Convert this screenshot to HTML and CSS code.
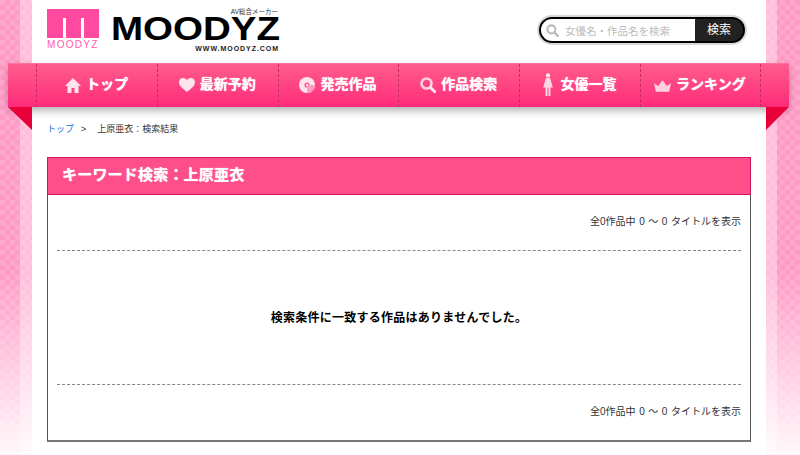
FILE: index.html
```html
<!DOCTYPE html>
<html lang="ja">
<head>
    <meta charset="UTF-8">
    <title>キーワード検索：上原亜衣</title>
    <link rel="stylesheet" href="styles.css">
</head>
<body>
<div class="page">
    <header class="head">
        <a class="logo">
            <span class="logo-mark">
                <span class="logo-box"><i></i><i></i></span>
                <span class="logo-small">MOODYZ</span>
            </span>
            <span class="logo-word">
                <span class="logo-sub">AV総合メーカー</span>
                <span class="logo-name">MOODYZ</span>
                <span class="logo-url">WWW.MOODYZ.COM</span>
            </span>
        </a>
        <form class="search">
            <div class="search-input">
                <svg class="search-icon" viewBox="0 0 14 14"><circle cx="5.8" cy="5.8" r="4.3" fill="none" stroke="#bbb" stroke-width="2.2"/><path d="M9 9l4 4" stroke="#bbb" stroke-width="2.6" stroke-linecap="round"/></svg>
                <span>女優名・作品名を検索</span>
            </div>
            <div class="search-btn">検索</div>
        </form>
    </header>

    <nav class="nav">
        <a class="nav-item">
            <svg class="ico" viewBox="0 0 16 16"><path d="M8 1L0 9h2.5v7h4v-5h3v5h4V9H16z" fill="#ffe3ee"/></svg><span>トップ</span>
        </a>
        <a class="nav-item">
            <svg class="ico" viewBox="0 0 16 16"><path d="M8 15C3 11 0 8.500 0 5.200 0 2.500 2 1 4.200 1 5.800 1 7.200 1.900 8 3.200 8.800 1.900 10.200 1 11.800 1 14 1 16 2.500 16 5.200 16 8.500 13 11 8 15z" fill="#ffe3ee"/></svg><span>最新予約</span>
        </a>
        <a class="nav-item">
            <svg class="ico" viewBox="0 0 16 16"><circle cx="8" cy="8" r="8" fill="#ffe3ee"/><circle cx="8" cy="8" r="2.600" fill="#ff4f8b"/><path d="M8 8l8 0a8 8 0 0 1-8 8z" fill="#ff9cc0"/><circle cx="8" cy="8" r="1.200" fill="#ffe3ee"/></svg><span>発売作品</span>
        </a>
        <a class="nav-item">
            <svg class="ico" viewBox="0 0 16 16"><circle cx="6.500" cy="6.500" r="5" fill="none" stroke="#ffd0e0" stroke-width="2.600"/><path d="M10.500 10.500l4.300 4.300" stroke="#ffe3ee" stroke-width="3" stroke-linecap="round"/></svg><span>作品検索</span>
        </a>
        <a class="nav-item">
            <svg class="ico ico-woman" viewBox="0 0 10 24"><circle cx="5" cy="2.500" r="2.300" fill="#ffe3ee"/><path d="M3 5.300h4l.9 2.200L10 15H7.600v9H5.500v-8.500h-1V24H2.400v-9H0l2.100-7.500z" fill="#ffd6e5"/></svg><span>女優一覧</span>
        </a>
        <a class="nav-item">
            <svg class="ico ico-crown" viewBox="0 0 18 12"><path d="M0 3l4.500 3L9 0l4.500 6L18 3l-2 9H2z" fill="#ffd0e0"/></svg><span>ランキング</span>
        </a>
        <span class="fold fold-left"></span>
        <span class="fold fold-right"></span>
    </nav>

    <div class="crumb"><a class="crumb-link">トップ</a><span class="crumb-sep">&gt;</span>上原亜衣：検索結果</div>

    <section class="panel">
        <h2 class="panel-title">キーワード検索：上原亜衣</h2>
        <div class="panel-body">
            <p class="count count-top">全0作品中 0 ～ 0 タイトルを表示</p>
            <p class="empty">検索条件に一致する作品はありませんでした。</p>
            <p class="count">全0作品中 0 ～ 0 タイトルを表示</p>
        </div>
    </section>
</div>
</body>
</html>
```

FILE: styles.css
```css
* {
    box-sizing: border-box;
}

html, body {
    height: 100%;
}

body {
    margin: 0;
    overflow: hidden;
    font-family: "Liberation Sans", "Noto Sans CJK JP", sans-serif;
    color: #333;
    background-color: #fff;
    background-image:
        linear-gradient(rgba(255, 255, 255, 0) 270px, #fff 470px),
        linear-gradient(90deg, rgba(255, 255, 255, 0) 20px, rgba(255, 255, 255, 0.35) 20px, rgba(255, 255, 255, 0.35) 777px, rgba(255, 255, 255, 0) 777px),
        repeating-conic-gradient(#ff9ac4 0 25%, #ffa8ce 0 50%);
    background-size: 100% 100%, 100% 100%, 10px 10px;
}

.page {
    width: 734px;
    height: 100%;
    margin-left: 32px;
    padding: 0 15px;
    background: #fff;
}

.head {
    display: flex;
    justify-content: space-between;
    height: 63px;
}

.logo {
    display: flex;
    gap: 13px;
    padding-top: 9px;
}

.logo-mark {
    display: flex;
    flex-direction: column;
    width: 52px;
}

.logo-box {
    display: flex;
    justify-content: center;
    align-items: flex-end;
    gap: 15px;
    height: 29px;
    background: #ff4aa0;
}

.logo-box i {
    width: 3px;
    height: 20px;
    background: #fff;
}

.logo-small {
    margin-top: 3px;
    font-size: 10px;
    line-height: 8px;
    letter-spacing: 1.3px;
    color: #ff5cab;
    white-space: nowrap;
}

.logo-word {
    position: relative;
    display: block;
    width: 167px;
}

.logo-sub {
    position: absolute;
    right: 1px;
    top: -2px;
    font-size: 6.500px;
    line-height: 9px;
    color: #333;
}

.logo-name {
    display: block;
    margin: 6px 0 0 -1px;
    font-weight: bold;
    font-size: 33.500px;
    line-height: 28px;
    color: #000;
    transform: scaleX(1.15);
    transform-origin: left;
}

.logo-url {
    display: block;
    margin-top: 2px;
    text-align: right;
    font-weight: bold;
    font-size: 7px;
    line-height: 8px;
    letter-spacing: 0.95px;
    color: #222;
}

.search {
    display: flex;
    width: 206px;
    height: 26px;
    margin: 17px 6px 0 0;
    border: 2px solid #000;
    border-radius: 13px;
    box-shadow: 0 0 0 2px #d8d8d8;
    overflow: hidden;
    background: #222;
}

.search-input {
    display: flex;
    align-items: center;
    gap: 6px;
    width: 154px;
    padding-left: 5px;
    background: #fff;
    font-size: 10.500px;
    color: #bbb;
    white-space: nowrap;
}

.search-icon {
    width: 13px;
    height: 13px;
}

.search-btn {
    flex: 1;
    text-align: center;
    font-size: 12px;
    line-height: 22px;
    color: #fff;
}

.nav {
    position: relative;
    display: flex;
    width: 781px;
    height: 44px;
    margin-left: -39px;
    padding-left: 28px;
    background: linear-gradient(#ff5c8d, #ff2b78);
    border-top: 1px solid #ff6f9a;
    box-shadow: 0 4px 8px -1px rgba(0, 0, 0, 0.35);
}

.nav-item {
    display: flex;
    flex: none;
    justify-content: center;
    align-items: center;
    gap: 5px;
    width: 120.800px;
    padding: 0 1px 5px 0;
    border-left: 1px dashed #c42a68;
    font-family: "Noto Sans CJK JP", sans-serif;
    font-weight: bold;
    font-size: 14px;
    color: #fff;
    text-shadow: 0 0 1px #fff;
    white-space: nowrap;
}

.nav-item:last-of-type {
    border-right: 1px dashed #c42a68;
}

.ico {
    width: 16px;
    height: 16px;
    flex-shrink: 0;
    margin-top: 3px;
}

.ico-woman {
    width: 10px;
    height: 23px;
    margin: 2px 3px 0 0;
}

.ico-crown {
    width: 17px;
    height: 12px;
    margin-top: 6px;
}

.fold {
    position: absolute;
    top: 43px;
    border-top: 23px solid #e8003a;
}

.fold-left {
    left: 0;
    border-left: 24px solid transparent;
}

.fold-right {
    right: 0;
    border-right: 23px solid transparent;
}

.crumb {
    height: 50px;
    padding-top: 15px;
    font-size: 9px;
    line-height: 14px;
}

.crumb-link {
    color: #1a6fe0;
}

.crumb-sep {
    margin: 0 11px 0 7px;
}

.panel {
    width: 704px;
    height: 285px;
    border: 1px solid #555;
    border-bottom-width: 2px;
    border-bottom-color: #777;
}

.panel-title {
    height: 38px;
    margin: -1px -1px 0;
    padding-left: 14px;
    background: #ff4f8b;
    border: 1px solid #d0145f;
    font-family: "Noto Sans CJK JP", sans-serif;
    font-size: 15px;
    letter-spacing: 0.2px;
    line-height: 32px;
    color: #fff;
    text-shadow: 0 0 1px #fff;
}

.panel-body {
    padding: 0 9px;
}

.count {
    margin: 0;
    height: 56px;
    padding-top: 19px;
    text-align: right;
    font-size: 10px;
    word-spacing: 0.8px;
    line-height: 16px;
}

.count-top {
    border-bottom: 1px dashed #888;
}

.empty {
    margin: 0;
    height: 134px;
    border-bottom: 1px dashed #888;
    text-align: center;
    font-family: "Noto Sans CJK JP", sans-serif;
    font-weight: bold;
    font-size: 12px;
    letter-spacing: 0.25px;
    line-height: 131px;
    color: #000;
}
```
